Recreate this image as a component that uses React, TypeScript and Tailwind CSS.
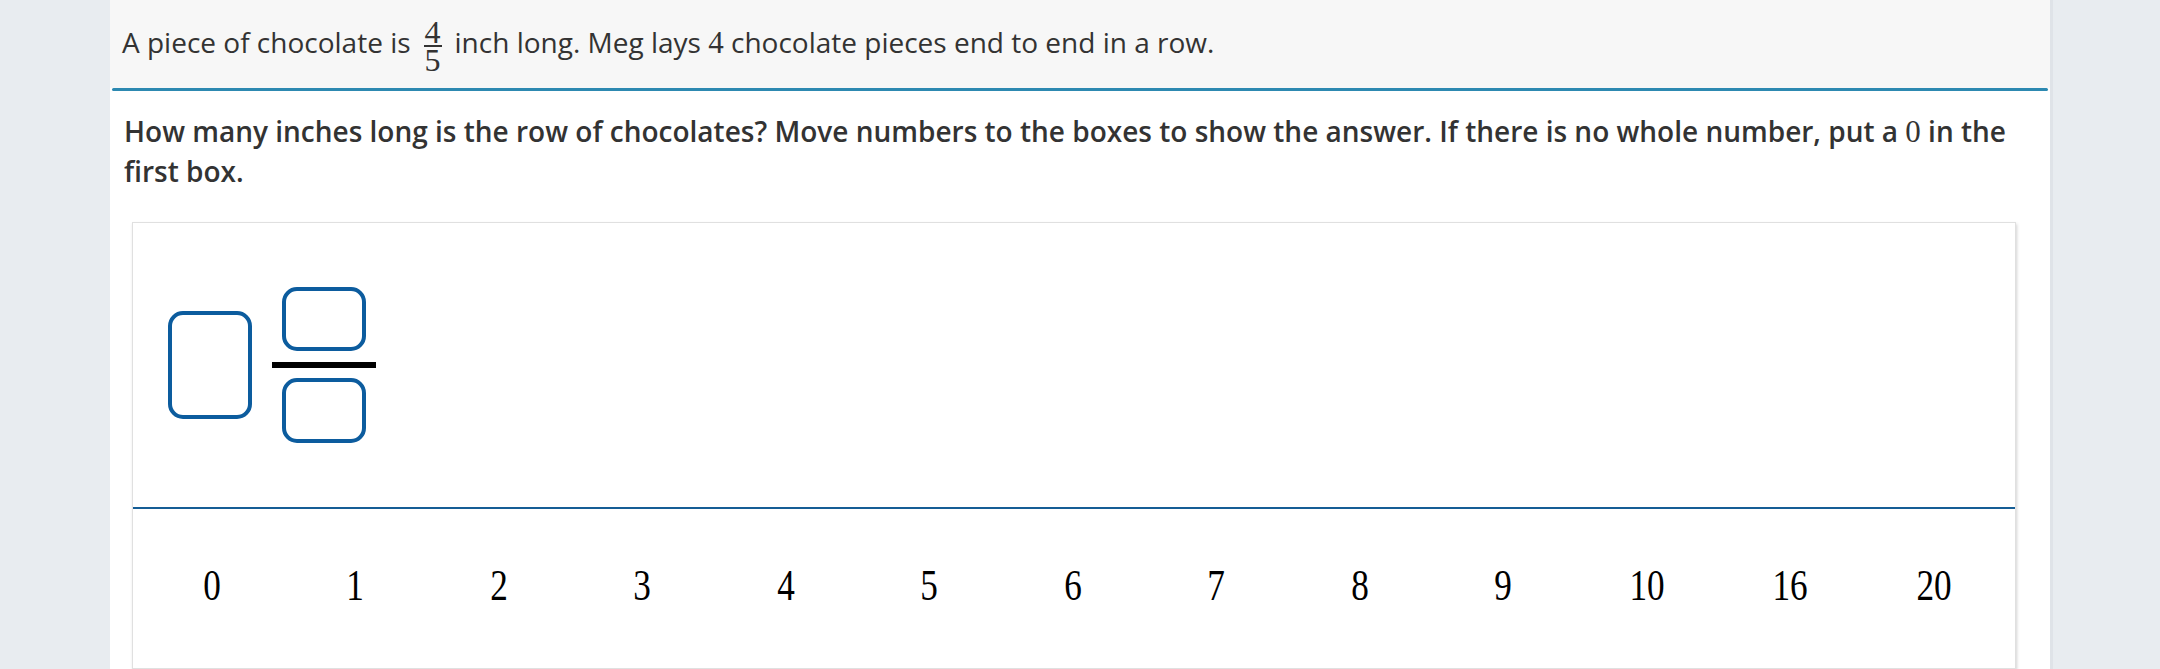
const numbers = ['0', '1', '2', '3', '4', '5', '6', '7', '8', '9', '10', '16', '20'];

const Slot = ({ className }: { className: string }) => (
  <div className={`border-4 border-[#0c5c9e] rounded-[15px] bg-white ${className}`} />
);

export default function App() {
  return (
    <div className="w-full h-[669px] bg-[#e8ecf0] flex font-['Open_Sans',sans-serif] text-[#333333] overflow-hidden">
      <div className="ml-[110px] w-[1943px] h-full bg-white border-r-[3px] border-[#dfe3e8] flex flex-col">
        <div className="h-[88px] bg-[#f7f7f7] flex items-center pl-[12px] pb-[4px] text-[28px]">
          <span>A piece of chocolate is</span>
          <span className="self-start mt-[19px] mx-[7px] w-[30px] flex flex-col items-center font-['Liberation_Serif',serif] text-[32px] leading-[26px]">
            <span className="block h-[26px]">4</span>
            <span className="block w-[18px] h-[2px] bg-[#333333]" />
            <span className="block h-[26px]">5</span>
          </span>
          <span>
            inch long. Meg lays <span className="font-['Liberation_Serif',serif] text-[31px] leading-[30px]">4</span> chocolate pieces end to end in a row.
          </span>
        </div>
        <div className="h-[3px] bg-[#2d89b1] mx-[2px] rounded-full" />
        <p className="mt-[20px] px-[14px] text-[28px] leading-[40px] font-semibold">
          How many inches long is the row of chocolates? Move numbers to the boxes to show the answer. If there is no whole number, put a{' '}
          <span className="font-['Liberation_Serif',serif] font-normal text-[31px] leading-[30px]">0</span> in the first box.
        </p>
        <div className="mt-[31px] ml-[22px] w-[1884px] flex-1 bg-white border border-[#e0e0e0] shadow-[1px_2px_3px_rgba(0,0,0,0.18)] flex flex-col">
          <div className="h-[284px] flex items-center pl-[35px]">
            <Slot className="w-[84px] h-[108px]" />
            <div className="ml-[20px] w-[104px] flex flex-col items-center">
              <Slot className="w-[84px] h-[64px]" />
              <div className="w-[104px] h-[6px] bg-black mt-[11px] mb-[10px]" />
              <Slot className="w-[84px] h-[65px]" />
            </div>
          </div>
          <div className="h-[2px] bg-[#155d95]" />
          <div className="flex-1 flex items-center pl-[7px] pb-[6px]">
            {numbers.map((n) => (
              <div key={n} className="w-[143.5px] flex justify-center">
                <span className="inline-block scale-x-[0.8] font-['Liberation_Serif',serif] text-[44px] leading-none text-black">
                  {n}
                </span>
              </div>
            ))}
          </div>
        </div>
      </div>
    </div>
  );
}
